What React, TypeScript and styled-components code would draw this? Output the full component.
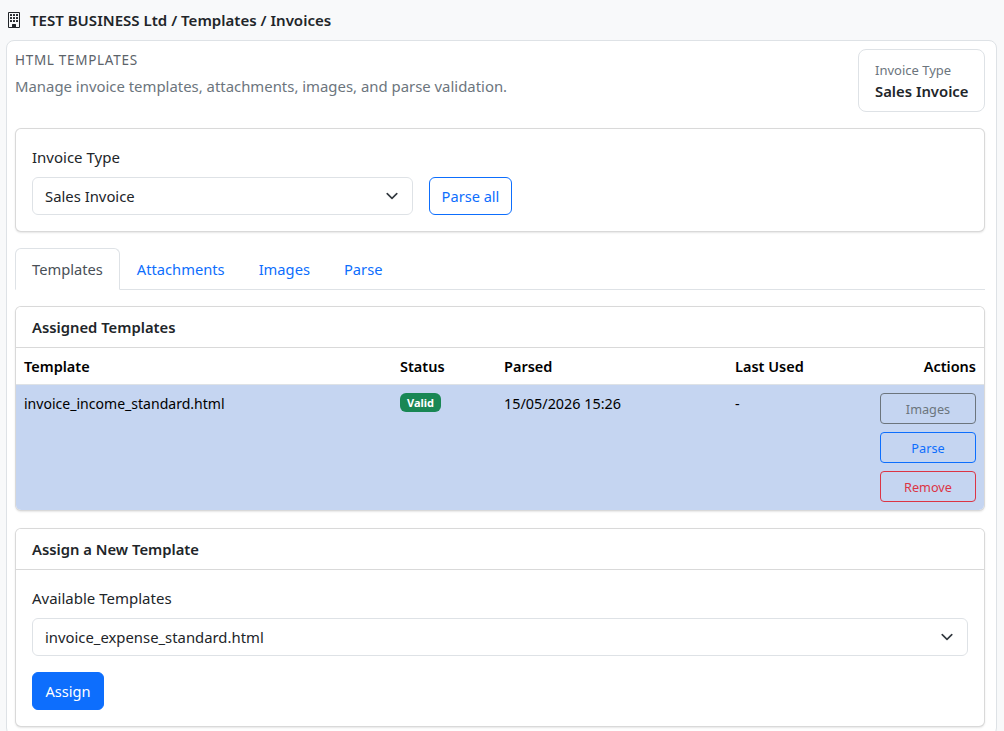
import React from "react";
import styled, { createGlobalStyle } from "styled-components";
import { BsBuilding } from "react-icons/bs";

const FONT = `"Noto Sans", "Open Sans", sans-serif`;

const Global = createGlobalStyle`
  * { box-sizing: border-box; }
  html, body { margin: 0; padding: 0; height: 731px; overflow: hidden; background: #f8f9fa; }
  body { font-family: ${FONT}; font-size: 15px; color: #212529; }
`;

const Page = styled.div`
  width: 1004px;
  padding: 0 7px 0 6px;
`;

const Breadcrumb = styled.div`
  height: 40px;
  display: flex;
  align-items: center;
  gap: 8px;
  font-size: 15.05px;
  font-weight: 600;
  color: #212529;
  svg { width: 16px; height: 16px; }
`;

const Shell = styled.div`
  background: #fff;
  border: 1px solid #dee2e6;
  border-radius: 8px;
  padding: 8px 11px 8px 8px;
`;

const Intro = styled.div`
  display: flex;
  justify-content: space-between;
  align-items: flex-start;
  margin-bottom: 16px;
`;

const Eyebrow = styled.div`
  font-size: 13.5px;
  line-height: 20px;
  letter-spacing: 0.7px;
  color: #5c636a;
  margin-top: 1px;
`;

const Lead = styled.div`
  font-size: 14.9px;
  line-height: 22px;
  color: #6c757d;
  margin-top: 5px;
`;

const Summary = styled.div`
  width: 127px;
  height: 63px;
  border: 1px solid #dee2e6;
  border-radius: 8px;
  padding: 11px 16px;
  background: #fff;
  white-space: nowrap;
`;

const SummaryLabel = styled.div`
  font-size: 13px;
  line-height: 18px;
  color: #6c757d;
`;

const SummaryValue = styled.div`
  font-size: 14.85px;
  font-weight: 600;
  line-height: 22px;
  margin-top: 1px;
`;

const Card = styled.section`
  background: #fff;
  border: 1px solid rgba(0, 0, 0, 0.15);
  border-radius: 6px;
  box-shadow: 0 1px 2px rgba(0, 0, 0, 0.1);
  overflow: hidden;
`;

const FilterBody = styled.div`
  padding: 16px;
`;

const Label = styled.div`
  font-size: 15px;
  line-height: 24px;
  margin-bottom: 8px;
`;

const FilterRow = styled.div`
  display: flex;
  gap: 16px;
  align-items: center;
`;

const Select = styled.div<{ $width?: string }>`
  flex: ${(p) => (p.$width ? `0 0 ${p.$width}` : "1")};
  height: 38px;
  border: 1px solid #dee2e6;
  border-radius: 6px;
  background: #fff;
  display: flex;
  align-items: center;
  justify-content: space-between;
  padding: 0 12px;
  font-size: 14.85px;
  color: #212529;
`;

const Chevron = () => (
  <svg width="16" height="16" viewBox="0 0 16 16" fill="none">
    <path d="m2 5 6 6 6-6" stroke="#343a40" strokeWidth="2" strokeLinecap="round" strokeLinejoin="round" transform="translate(1.6 1.6) scale(.8)" />
  </svg>
);

const Button = styled.button<{ $tone: string; $solid?: boolean; $width?: string }>`
  font-family: ${FONT};
  font-size: 14.6px;
  height: 38px;
  width: ${(p) => p.$width ?? "auto"};
  padding: 0;
  border: 1px solid ${(p) => p.$tone};
  border-radius: 6px;
  background: ${(p) => (p.$solid ? p.$tone : "transparent")};
  color: ${(p) => (p.$solid ? "#fff" : p.$tone)};
`;

const SmallButton = styled(Button)`
  display: block;
  width: 96px;
  height: 31px;
  padding-top: 1px;
  font-size: 12.7px;
  border-radius: 4px;
  margin-left: auto;
  & + & { margin-top: 8px; }
`;

const Tabs = styled.nav`
  display: flex;
  margin: 16px 0;
  border-bottom: 1px solid #dee2e6;
  height: 42px;
`;

const Tab = styled.div<{ $active?: boolean }>`
  height: 42px;
  padding: 0 16px;
  display: flex;
  align-items: center;
  font-size: 14.7px;
  border: 1px solid ${(p) => (p.$active ? "#dee2e6" : "transparent")};
  border-bottom-color: ${(p) => (p.$active ? "#fff" : "transparent")};
  border-radius: 6px 6px 0 0;
  background: ${(p) => (p.$active ? "#fff" : "transparent")};
  color: ${(p) => (p.$active ? "#495057" : "#0d6efd")};
`;

const CardHeader = styled.div`
  height: 41px;
  padding: 0 16px;
  display: flex;
  align-items: center;
  font-size: 14.8px;
  font-weight: 600;
  background: #fff;
  border-bottom: 1px solid rgba(0, 0, 0, 0.15);
`;

const Table = styled.table`
  width: 100%;
  border-collapse: collapse;
  table-layout: fixed;
  font-size: 14.4px;
  color: #000;
`;

const Th = styled.th<{ $w?: string; $right?: boolean }>`
  width: ${(p) => p.$w ?? "auto"};
  height: 36px;
  padding: 0 8px;
  font-size: 14.5px;
  font-weight: 600;
  text-align: ${(p) => (p.$right ? "right" : "left")};
  border-bottom: 1px solid #dee2e6;
`;

const Td = styled.td`
  background: #c5d5f1;
  padding: 8px;
  vertical-align: top;
  line-height: 21px;
`;

const FileName = styled.span`
  font-size: 14.05px;
`;

const Badge = styled.span`
  display: inline-block;
  height: 19px;
  padding: 0 7px;
  border-radius: 6px;
  background: #198754;
  color: #fff;
  font-size: 11px;
  font-weight: 700;
  line-height: 19px;
  vertical-align: top;
`;

const AssignCard = styled(Card)`
  margin-top: 17px;
`;

const AssignBody = styled.div`
  padding: 16px;
  & > ${Select} { margin-bottom: 16px; }
`;

export default function App() {
  return (
    <Page>
      <Global />
      <Breadcrumb>
        <BsBuilding />
        <span>TEST BUSINESS Ltd / Templates / Invoices</span>
      </Breadcrumb>
      <Shell>
        <Intro>
          <div>
            <Eyebrow>HTML TEMPLATES</Eyebrow>
            <Lead>Manage invoice templates, attachments, images, and parse validation.</Lead>
          </div>
          <Summary>
            <SummaryLabel>Invoice Type</SummaryLabel>
            <SummaryValue>Sales Invoice</SummaryValue>
          </Summary>
        </Intro>
        <Card>
          <FilterBody>
            <Label>Invoice Type</Label>
            <FilterRow>
              <Select $width="381px">
                Sales Invoice
                <Chevron />
              </Select>
              <Button $tone="#0d6efd" $width="83px">Parse all</Button>
            </FilterRow>
          </FilterBody>
        </Card>
        <Tabs>
          <Tab $active>Templates</Tab>
          <Tab>Attachments</Tab>
          <Tab>Images</Tab>
          <Tab>Parse</Tab>
        </Tabs>
        <Card>
          <CardHeader>Assigned Templates</CardHeader>
          <Table>
            <thead>
              <tr>
                <Th $w="376px">Template</Th>
                <Th $w="104px">Status</Th>
                <Th $w="231px">Parsed</Th>
                <Th>Last Used</Th>
                <Th $w="130px" $right>Actions</Th>
              </tr>
            </thead>
            <tbody>
              <tr>
                <Td><FileName>invoice_income_standard.html</FileName></Td>
                <Td><Badge>Valid</Badge></Td>
                <Td>15/05/2026 15:26</Td>
                <Td>-</Td>
                <Td>
                  <SmallButton $tone="#6c757d">Images</SmallButton>
                  <SmallButton $tone="#0d6efd">Parse</SmallButton>
                  <SmallButton $tone="#dc3545">Remove</SmallButton>
                </Td>
              </tr>
            </tbody>
          </Table>
        </Card>
        <AssignCard>
          <CardHeader>Assign a New Template</CardHeader>
          <AssignBody>
            <Label>Available Templates</Label>
            <Select>
              invoice_expense_standard.html
              <Chevron />
            </Select>
            <Button $tone="#0d6efd" $solid $width="72px">Assign</Button>
          </AssignBody>
        </AssignCard>
      </Shell>
    </Page>
  );
}
